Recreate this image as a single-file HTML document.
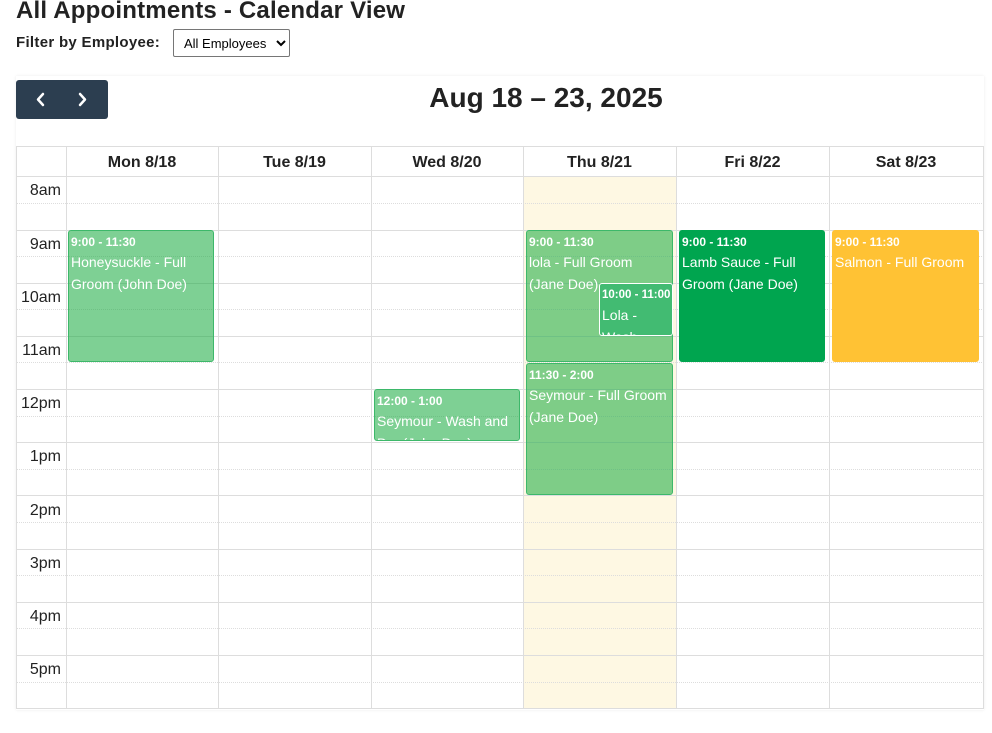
<!DOCTYPE html>
<html><head><meta charset="utf-8"><style>
*{box-sizing:border-box;margin:0;padding:0}
body{width:992px;height:733px;background:#fff;font-family:"Liberation Sans",Arial,sans-serif;color:#222;position:relative;overflow:hidden}
h1{position:absolute;left:16px;top:-3px;font-size:24px;font-weight:bold;color:#222;letter-spacing:0.2px}
.flt{position:absolute;left:16px;top:34px;font-size:15px;font-weight:bold;color:#222;letter-spacing:0.3px}
select{position:absolute;left:173px;top:29px;width:117px;height:28px;font-size:13px;font-family:"Liberation Sans",Arial,sans-serif;border:1px solid #767676;border-radius:2px;background:#fff;padding-left:6px}
.card{position:absolute;left:16px;top:76px;width:968px;height:634px;box-shadow:0 0 3px rgba(0,0,0,0.08)}
.nav{position:absolute;left:16px;top:80px;width:92px;height:39px;background:#2c3e50;border-radius:3px}
.title{position:absolute;left:346px;top:82px;width:400px;text-align:center;font-size:28px;font-weight:bold;color:#222}
.ab{position:absolute}
.hl{position:absolute;left:16px;width:968px;height:1px;background:#ddd}
.hd{position:absolute;left:16px;width:968px;height:0;border-top:1px dotted #ddd}
.vl{position:absolute;top:146px;height:563px;width:1px;background:#ddd}
.dh{position:absolute;top:148px;height:30px;line-height:30px;text-align:center;font-weight:bold;font-size:16px;color:#222}
.tl{position:absolute;left:16px;width:45px;text-align:right;font-size:16px;color:#222}
.ev{position:absolute;border-radius:3px;color:#fff;padding:2px 2px;overflow:hidden;font-size:14px;line-height:22px}
.ev b{display:block;font-size:12px;line-height:18px;font-weight:bold;white-space:nowrap}
.lg{background:rgba(20,170,60,0.55);border:1px solid #3db86a}
</style></head><body>
<h1>All Appointments - Calendar View</h1>
<div class="flt">Filter by Employee:</div>
<select><option>All Employees</option></select>
<div class="card"></div>
<div class="nav">
<svg width="92" height="39" viewBox="0 0 92 39"><path d="M27 14l-5 5.5 5 5.5M64 14l5 5.5-5 5.5" stroke="#fff" stroke-width="2.5" fill="none" stroke-linecap="round" stroke-linejoin="round"/></svg>
</div>
<div class="title">Aug 18 – 23, 2025</div>
<div class="ab" style="left:523px;top:177px;width:153px;height:532px;background:#fef8e3"></div>
<div class="hl" style="top:146px"></div>
<div class="hl" style="top:176px"></div>
<div class="hd" style="top:203px"></div><div class="hl" style="top:230px"></div>
<div class="hd" style="top:256px"></div><div class="hl" style="top:283px"></div>
<div class="hd" style="top:309px"></div><div class="hl" style="top:336px"></div>
<div class="hd" style="top:362px"></div><div class="hl" style="top:389px"></div>
<div class="hd" style="top:416px"></div><div class="hl" style="top:442px"></div>
<div class="hd" style="top:469px"></div><div class="hl" style="top:495px"></div>
<div class="hd" style="top:522px"></div><div class="hl" style="top:549px"></div>
<div class="hd" style="top:575px"></div><div class="hl" style="top:602px"></div>
<div class="hd" style="top:628px"></div><div class="hl" style="top:655px"></div>
<div class="hd" style="top:682px"></div><div class="hl" style="top:708px"></div>
<div class="vl" style="left:16px"></div><div class="vl" style="left:66px"></div><div class="vl" style="left:218px"></div><div class="vl" style="left:371px"></div><div class="vl" style="left:523px"></div><div class="vl" style="left:676px"></div><div class="vl" style="left:829px"></div><div class="vl" style="left:983px"></div>
<div class="dh" style="left:66px;width:152px">Mon 8/18</div>
<div class="dh" style="left:218px;width:153px">Tue 8/19</div>
<div class="dh" style="left:371px;width:152px">Wed 8/20</div>
<div class="dh" style="left:523px;width:153px">Thu 8/21</div>
<div class="dh" style="left:676px;width:153px">Fri 8/22</div>
<div class="dh" style="left:829px;width:154px">Sat 8/23</div>
<div class="tl" style="top:182px">8am</div>
<div class="tl" style="top:236px">9am</div>
<div class="tl" style="top:289px">10am</div>
<div class="tl" style="top:342px">11am</div>
<div class="tl" style="top:395px">12pm</div>
<div class="tl" style="top:448px">1pm</div>
<div class="tl" style="top:502px">2pm</div>
<div class="tl" style="top:555px">3pm</div>
<div class="tl" style="top:608px">4pm</div>
<div class="tl" style="top:661px">5pm</div>
<div class="ev lg" style="left:68px;top:230px;width:146px;height:132px"><b>9:00 - 11:30</b>Honeysuckle - Full Groom (John Doe)</div>
<div class="ev lg" style="left:374px;top:389px;width:146px;height:52px"><b>12:00 - 1:00</b>Seymour - Wash and Dry (John Doe)</div>
<div class="ev lg" style="left:526px;top:230px;width:147px;height:132px"><b>9:00 - 11:30</b>lola - Full Groom (Jane Doe)</div>
<div class="ev" style="left:599px;top:283px;width:74px;height:53px;background:#42bb72;border:1px solid #fff"><b style="font-size:11.5px">10:00 - 11:00</b>Lola - Wash</div>
<div class="ev lg" style="left:526px;top:363px;width:147px;height:132px"><b>11:30 - 2:00</b>Seymour - Full Groom (Jane Doe)</div>
<div class="ev" style="left:679px;top:230px;width:146px;height:132px;background:#00a54f;border:1px solid #00a54f"><b>9:00 - 11:30</b>Lamb Sauce - Full Groom (Jane Doe)</div>
<div class="ev" style="left:832px;top:230px;width:147px;height:132px;background:#ffc234;border:1px solid #ffc234"><b>9:00 - 11:30</b>Salmon - Full Groom</div>
</body></html>
